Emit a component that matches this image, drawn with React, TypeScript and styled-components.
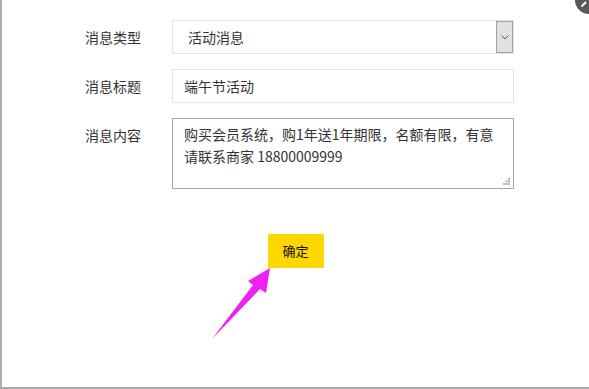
import React from "react";
import styled, { createGlobalStyle } from "styled-components";

const GlobalStyle = createGlobalStyle`
  html, body {
    margin: 0;
    padding: 0;
    background: #fff;
  }
  body {
    font-family: "Noto Sans CJK SC", "Liberation Sans", sans-serif;
    color: #333;
  }
`;

const Frame = styled.div`
  position: relative;
  width: 589px;
  height: 389px;
  box-sizing: border-box;
  border-left: 2px solid #ababab;
  border-bottom: 2px solid #ababab;
  overflow: hidden;
  background: #fff;
`;

const Form = styled.div`
  display: flex;
  flex-direction: column;
  gap: 15px;
  padding: 20px 0 0 83px;
`;

const Row = styled.div`
  display: flex;
  align-items: flex-start;
`;

const Label = styled.div`
  width: 87px;
  flex: none;
  font-size: 14px;
  line-height: 34px;
  color: #333;
`;

const Field = styled.div<{ $tone?: "light" | "dark" }>`
  position: relative;
  width: 342px;
  height: 34px;
  box-sizing: border-box;
  border: 1px solid ${(p) => (p.$tone === "dark" ? "#a6a6a6" : "#e3e3e3")};
  font-size: 14px;
  line-height: 32px;
  color: #333;
  background: #fff;
`;

const SelectBox = styled(Field)`
  display: flex;
  padding-left: 15px;
`;

const SelectText = styled.div`
  flex: 1;
`;

const DropButton = styled.div`
  width: 17px;
  height: 32px;
  box-sizing: border-box;
  border: 1px solid #a2a2a2;
  background: #e1e1e1;
  display: flex;
  align-items: center;
  justify-content: center;
`;

const Input = styled(Field)`
  padding-left: 11px;
`;

const TextArea = styled(Field)`
  height: 71px;
  padding: 4px 11px 0 11px;
  line-height: 22px;
`;

const Grip = styled.div`
  position: absolute;
  right: 3px;
  bottom: 3px;
  width: 7px;
  height: 7px;
  line-height: 0;

  svg {
    display: block;
  }
`;

const Actions = styled.div`
  display: flex;
  justify-content: center;
  padding-top: 45px;
`;

const Button = styled.div`
  width: 56px;
  height: 34px;
  background: #ffd700;
  color: #111;
  font-size: 13px;
  line-height: 34px;
  text-align: center;
  cursor: pointer;
`;

const Close = styled.div`
  position: absolute;
  top: -14px;
  right: -14px;
  width: 28px;
  height: 28px;
  border-radius: 50%;
  background: #595959;
  line-height: 0;
`;

const Arrow = styled.svg`
  position: absolute;
  left: 0;
  top: 0;
  pointer-events: none;
`;

function App() {
  return (
    <>
      <GlobalStyle />
      <Frame>
        <Form>
          <Row>
            <Label>消息类型</Label>
            <SelectBox>
              <SelectText>活动消息</SelectText>
              <DropButton>
                <svg width="8" height="5" viewBox="0 0 8 5">
                  <path d="M0.5 0.5 L4 4 L7.5 0.5" fill="none" stroke="#555" strokeWidth="1" />
                </svg>
              </DropButton>
            </SelectBox>
          </Row>
          <Row>
            <Label>消息标题</Label>
            <Input>端午节活动</Input>
          </Row>
          <Row>
            <Label>消息内容</Label>
            <TextArea $tone="dark">
              购买会员系统，购1年送1年期限，名额有限，有意请联系商家 18800009999
              <Grip>
                <svg width="7" height="7" viewBox="0 0 7 7">
                  <g fill="#b5b5b5">
                    <rect x="5" y="0" width="2" height="2" />
                    <rect x="2.5" y="2.5" width="2" height="2" />
                    <rect x="5" y="2.5" width="2" height="2" />
                    <rect x="0" y="5" width="2" height="2" />
                    <rect x="2.5" y="5" width="2" height="2" />
                    <rect x="5" y="5" width="2" height="2" />
                  </g>
                </svg>
              </Grip>
            </TextArea>
          </Row>
        </Form>
        <Actions>
          <Button>确定</Button>
        </Actions>
        <Close>
          <svg width="28" height="28" viewBox="0 0 28 28">
            <path d="M7 20 L10.5 16.5" stroke="#fff" strokeWidth="2" strokeLinecap="round" />
          </svg>
        </Close>
        <Arrow width="589" height="389" viewBox="0 0 589 389">
          <polygon
            points="268,268 264,293 258,289 210,339 251,285 246,281"
            fill="#f020f0"
          />
        </Arrow>
      </Frame>
    </>
  );
}

export default App;
